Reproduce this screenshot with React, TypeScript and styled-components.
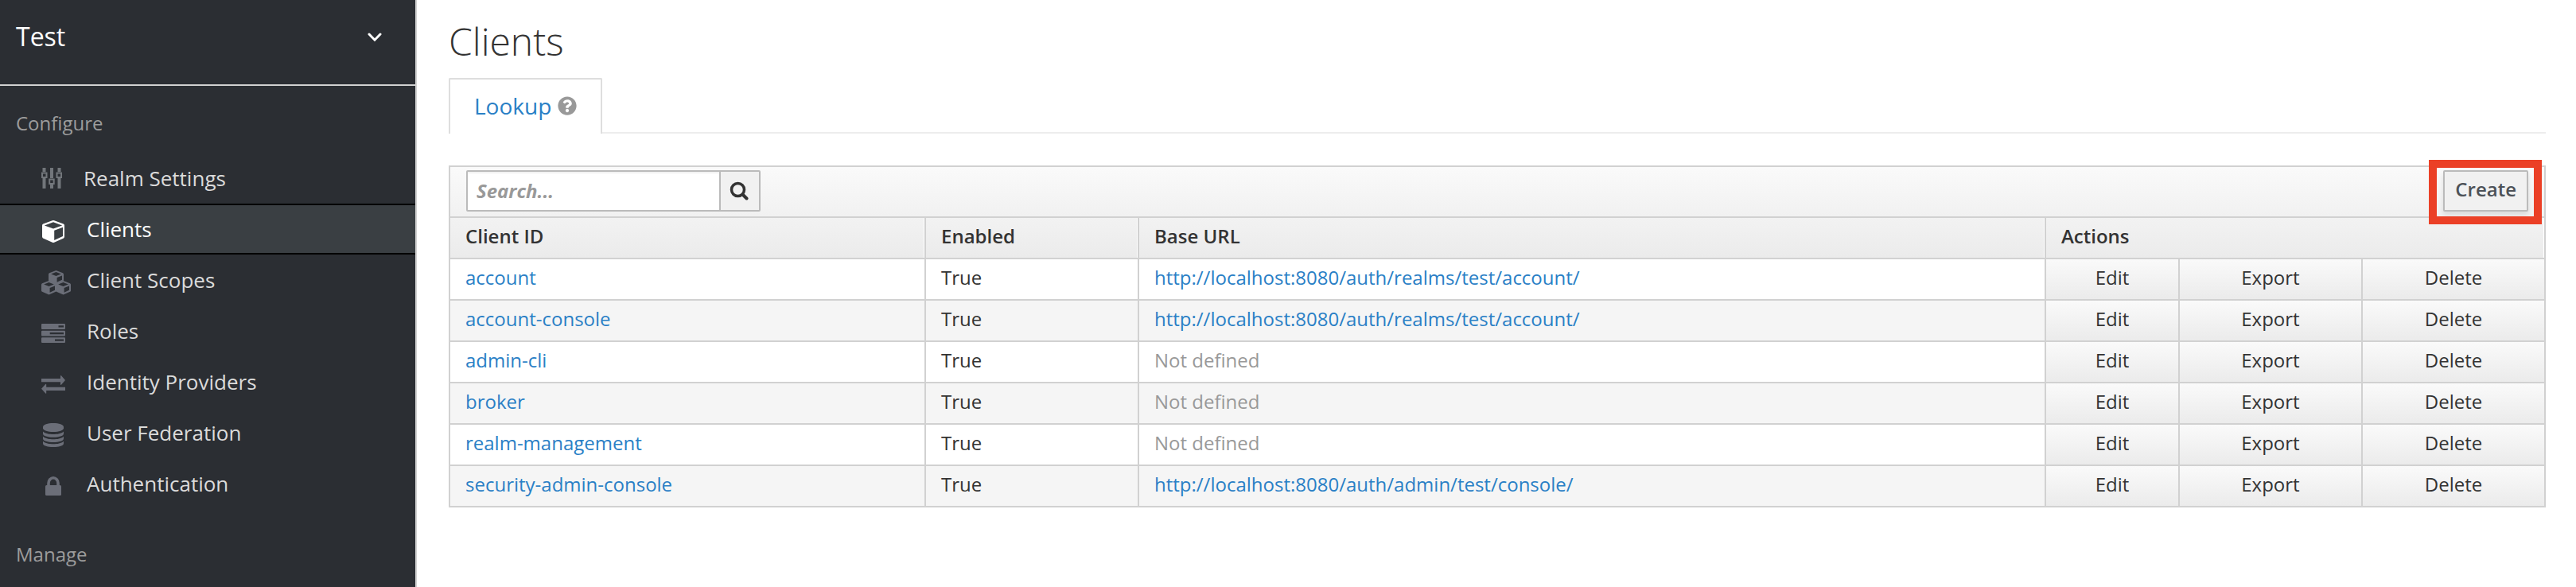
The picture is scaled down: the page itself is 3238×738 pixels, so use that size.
import React from 'react';
import styled, { createGlobalStyle } from 'styled-components';
import { FaQuestionCircle } from 'react-icons/fa';

const GlobalStyle = createGlobalStyle`
  *, *::before, *::after { box-sizing: border-box; }
  body {
    margin: 0;
    background: #fff;
    color: #333;
    font-family: 'Open Sans', 'Liberation Sans', sans-serif;
    font-size: 24px;
    line-height: 40px;
  }
  button, input { font: inherit; color: inherit; }
  a { color: #2a80c6; text-decoration: none; }
`;

const Page = styled.div`
  display: flex;
  min-height: 100vh;
`;

const Sidebar = styled.aside`
  flex: 0 0 524px;
  background: #2b2e33;
  border-right: 2px solid #d1d1d1;
`;

const RealmButton = styled.button`
  display: flex;
  align-items: flex-start;
  justify-content: space-between;
  width: 100%;
  height: 108px;
  padding: 24px 42px 0 20px;
  border: 0;
  border-bottom: 2px solid #d1d1d1;
  background: transparent;
  color: #fff;
  font-size: 32px;
  line-height: 44px;
  text-align: left;

  svg { margin-top: 17px; }
`;

const NavGroup = styled.nav`
  padding-top: 26px;
`;

const NavTitle = styled.h2`
  margin: 0;
  padding-left: 20px;
  color: #9c9c9c;
  font-size: 24px;
  font-weight: 400;
  line-height: 42px;
`;

const NavList = styled.ul`
  margin: 0;
  padding: 16px 0 10px;
  list-style: none;
`;

const NavLink = styled.a<{ $active?: boolean }>`
  display: flex;
  align-items: center;
  height: 64px;
  padding-left: 52px;
  border-top: 2px solid ${p => (p.$active ? '#000' : 'transparent')};
  border-bottom: 2px solid ${p => (p.$active ? '#000' : 'transparent')};
  background: ${p => (p.$active ? '#3a3f43' : 'transparent')};
  color: ${p => (p.$active ? '#fff' : '#dbdbdb')};
  font-size: 26px;

  svg { color: ${p => (p.$active ? '#fff' : '#6b6e78')}; }
`;

const IconSlot = styled.span<{ $narrow?: boolean }>`
  display: flex;
  flex: 0 0 ${p => (p.$narrow ? '53px' : '57px')};
  padding-top: ${p => (p.$narrow ? '0' : '6px')};
`;

const IconBox = styled.span`
  display: flex;
  justify-content: center;
  min-width: 30px;
`;

const Main = styled.main`
  flex: 1;
  min-width: 0;
  padding: 26px 38px 40px 40px;
`;

const Title = styled.h1`
  margin: 0 0 20px;
  font-size: 48px;
  font-weight: 300;
  line-height: 52px;
`;

const Tabs = styled.ul`
  display: flex;
  height: 70px;
  margin: 0 0 40px;
  padding: 0;
  border-bottom: 2px solid #ededed;
  list-style: none;
`;

const Tab = styled.li`
  display: flex;
  align-items: center;
  gap: 8px;
  height: 70px;
  padding: 0 30px 2px;
  border: 2px solid #dedede;
  border-bottom: 0;
  border-radius: 2px 2px 0 0;
  background: #fff;
  color: #999;
  font-size: 28px;
`;

const Panel = styled.section`
  border: 2px solid #d1d1d1;
`;

const Toolbar = styled.div`
  display: flex;
  align-items: flex-start;
  justify-content: space-between;
  padding: 4px 20px 6px;
  border-bottom: 2px solid #d1d1d1;
  background: linear-gradient(#fafafa, #f1f1f1);
`;

const SearchGroup = styled.form`
  display: flex;
  height: 52px;
  border: 2px solid #bbb;
  border-radius: 2px;
  background: #fff;
`;

const SearchInput = styled.input`
  width: 316px;
  padding: 0 11px;
  border: 0;
  outline: 0;
  background: #fff;
  box-shadow: inset 0 2px 2px rgba(0, 0, 0, 0.06);

  &::placeholder {
    color: #999;
    font-style: italic;
    font-weight: 700;
    opacity: 1;
  }
`;

const SearchButton = styled.button`
  display: flex;
  align-items: center;
  justify-content: center;
  width: 50px;
  padding: 0 2px 0 0;
  border: 0;
  border-left: 2px solid #bbb;
  background: #f1f1f1;
`;

const Highlight = styled.div`
  position: relative;

  &::after {
    content: '';
    position: absolute;
    inset: -13px -17px -16px -18px;
    border: 10px solid #eb4026;
    pointer-events: none;
  }
`;

const CreateButton = styled.button`
  display: block;
  height: 52px;
  padding: 0 13px 4px;
  border: 2px solid #bbb;
  border-radius: 2px;
  background: #f1f1f1;
  box-shadow: 0 4px 6px rgba(3, 3, 3, 0.1);
  color: #4d5258;
  font-weight: 600;
`;

const Table = styled.table`
  width: 100%;
  border-collapse: separate;
  border-spacing: 0;
  table-layout: fixed;
`;

const Col = styled.col<{ $width?: number }>`
  width: ${p => (p.$width ? `${p.$width}px` : 'auto')};
`;

const HeadCell = styled.th`
  height: 52px;
  padding: 0 19px 5px;
  border-bottom: 2px solid #d1d1d1;
  border-right: 2px solid #d1d1d1;
  background: linear-gradient(#f2f2f2, #ebebeb);
  box-shadow: inset -1px 0 0 #fff;
  font-weight: 600;
  text-align: left;

  &:last-child { border-right: 0; }
`;

const Cell = styled.td`
  height: 52px;
  padding: 0 19px 5px;
  border-bottom: 2px solid #d1d1d1;
  border-right: 2px solid #d1d1d1;

  &:last-child { border-right: 0; }
`;

const ActionCell = styled(Cell)`
  padding: 0;
  background: linear-gradient(#fafafa, #ebebeb);
`;

const ActionButton = styled.button`
  display: block;
  width: 100%;
  height: 50px;
  padding: 0 0 5px;
  border: 0;
  background: transparent;
`;

const Row = styled.tr`
  &:nth-child(even) { background: #f5f5f5; }
  &:last-child > td { height: 50px; border-bottom: 0; }
`;

const Muted = styled.span`
  color: #999;
`;

const HelpIcon = styled(FaQuestionCircle)`
  width: 24px;
  height: 24px;
`;

const SlidersIcon = () => (
  <svg width="26" height="26" viewBox="0 0 26 26" fill="none" stroke="#72767b" aria-hidden="true">
    <path strokeWidth="4" d="M3.5 0v5M3.5 13v13M13 0v13M13 21v5M22.5 0v5M22.5 13v13" />
    <path strokeWidth="2" d="M1 6.5h5.500v5.500h-5.500zM10.200 14.500h5.500v5.500h-5.500zM19.500 6.500h5.500v5.500h-5.500z" />
  </svg>
);

const cubeShape =
  'M14 0Q14.600 0 15.200 .3L26.800 4.600Q28 5.100 28 6.500V20.500Q28 21.800 27 22.400L15.200 27.800Q14 28.400 12.800 27.800L1 22.400Q0 21.800 0 20.500V6.500Q0 5.100 1.200 4.600L12.800 .3Q13.400 0 14 0ZM14 2.300L2.800 6.400L14 10.600L25.200 6.400ZM15.200 12.800V25L26 20V8.800Z';

const CubeIcon = () => (
  <svg width="28" height="28" viewBox="0 0 28 28" fill="currentColor" fillRule="evenodd" aria-hidden="true">
    <path d={cubeShape} />
  </svg>
);

const smallCube =
  'M9.500 0L18 3.200Q19 3.700 19 4.800V12.200Q19 13.200 18 13.700L9.500 17.500L1 13.700Q0 13.200 0 12.200V4.800Q0 3.700 1 3.200ZM9.500 2L3.200 4.500L9.500 7.100L15.800 4.500ZM10.600 9V14.700L17 11.800V6.400Z';

const CubesIcon = () => (
  <svg width="37" height="31" viewBox="0 0 37 31" fill="currentColor" fillRule="evenodd" aria-hidden="true">
    <path d={smallCube} transform="translate(9 0)" />
    <path d={smallCube} transform="translate(0 13)" />
    <path d={smallCube} transform="translate(18 13)" />
  </svg>
);

const TasksIcon = () => (
  <svg width="30" height="24" viewBox="0 0 30 24" fill="currentColor" fillRule="evenodd" aria-hidden="true">
    <path d="M1 0h28q1 0 1 1v5q0 1-1 1h-28q-1 0-1-1v-5q0-1 1-1zM21.500 2.300v2.300h6.500v-2.300z" />
    <path d="M1 8.800h28q1 0 1 1v4.600q0 1-1 1h-28q-1 0-1-1v-4.600q0-1 1-1zM10.700 11v2.300h17.300v-2.300z" />
    <path d="M1 17.200h28q1 0 1 1v4.800q0 1-1 1h-28q-1 0-1-1v-4.800q0-1 1-1zM17 19.500v2.300h11v-2.300z" />
  </svg>
);

const ExchangeIcon = () => (
  <svg width="30" height="23" viewBox="0 0 30 23" fill="currentColor" aria-hidden="true">
    <path d="M0 4h24V0.500q.3-.8 1-.2L30 6l-5 5.700q-.7.500-1-.2V8.300H0z" />
    <path d="M30 14.700H6.200V11.200q-.3-.8-1-.2L0 16.800l5.200 5.800q.7.500 1-.2V19H30z" />
  </svg>
);

const bandShape = 'M0 10.500C3 13.300 8 14 13 14S23 13.300 26 10.500V13.300C26 16.200 20 17.800 13 17.800S0 16.200 0 13.300Z';

const DatabaseIcon = () => (
  <svg width="26" height="30" viewBox="0 0 26 30" fill="currentColor" aria-hidden="true">
    <path d="M13 0C20 0 26 2 26 4.600V6.200C26 9 20 11 13 11S0 9 0 6.200V4.600C0 2 6 0 13 0Z" />
    <path d={bandShape} />
    <path d={bandShape} transform="translate(0 6.200)" />
    <path d={bandShape} transform="translate(0 12.300)" />
  </svg>
);

const LockIcon = () => (
  <svg width="20" height="24" viewBox="0 0 20 24" aria-hidden="true">
    <path d="M4 12V8.500a6 6.700 0 0 1 12 0V12" fill="none" stroke="currentColor" strokeWidth="3.600" />
    <rect y="11" width="20" height="13" rx="1.500" fill="currentColor" />
  </svg>
);

const ChevronIcon = () => (
  <svg width="18" height="12" viewBox="0 0 18 12" fill="none" stroke="#fff" strokeWidth="3" strokeLinecap="round" aria-hidden="true">
    <path d="M2 2l7 7.200L16 2" />
  </svg>
);

const SearchIcon = () => (
  <svg width="24" height="24" viewBox="0 0 24 24" fill="none" stroke="#333" aria-hidden="true">
    <circle cx="10.500" cy="10.500" r="8" strokeWidth="3.500" />
    <path d="M16.500 16.500L21.500 21.500" strokeWidth="4" strokeLinecap="round" />
  </svg>
);

const configureItems = [
  { label: 'Realm Settings', Icon: SlidersIcon, narrow: true },
  { label: 'Clients', Icon: CubeIcon, active: true },
  { label: 'Client Scopes', Icon: CubesIcon },
  { label: 'Roles', Icon: TasksIcon },
  { label: 'Identity Providers', Icon: ExchangeIcon },
  { label: 'User Federation', Icon: DatabaseIcon },
  { label: 'Authentication', Icon: LockIcon },
];

const accountUrl = 'http://localhost:8080/auth/realms/test/account/';

const clients = [
  { id: 'account', url: accountUrl },
  { id: 'account-console', url: accountUrl },
  { id: 'admin-cli', url: null },
  { id: 'broker', url: null },
  { id: 'realm-management', url: null },
  { id: 'security-admin-console', url: 'http://localhost:8080/auth/admin/test/console/' },
];

const actions = ['Edit', 'Export', 'Delete'];

export default function App() {
  return (
    <>
      <GlobalStyle />
      <Page>
        <Sidebar>
          <RealmButton type="button">
            Test
            <ChevronIcon />
          </RealmButton>
          <NavGroup aria-label="Configure">
            <NavTitle>Configure</NavTitle>
            <NavList>
              {configureItems.map(({ label, Icon, active, narrow }) => (
                <li key={label}>
                  <NavLink href="#" $active={active} aria-current={active ? 'page' : undefined}>
                    <IconSlot $narrow={narrow}>
                      {narrow ? <Icon /> : <IconBox><Icon /></IconBox>}
                    </IconSlot>
                    {label}
                  </NavLink>
                </li>
              ))}
            </NavList>
          </NavGroup>
          <NavGroup aria-label="Manage">
            <NavTitle>Manage</NavTitle>
          </NavGroup>
        </Sidebar>
        <Main>
          <Title>Clients</Title>
          <Tabs>
            <Tab>
              <a href="#">Lookup</a>
              <HelpIcon aria-label="Help" />
            </Tab>
          </Tabs>
          <Panel>
            <Toolbar>
              <SearchGroup role="search" onSubmit={e => e.preventDefault()}>
                <SearchInput type="text" placeholder="Search..." aria-label="Search clients" />
                <SearchButton type="submit" aria-label="Search">
                  <SearchIcon />
                </SearchButton>
              </SearchGroup>
              <Highlight>
                <CreateButton type="button">Create</CreateButton>
              </Highlight>
            </Toolbar>
            <Table>
              <colgroup>
                <Col $width={598} />
                <Col $width={268} />
                <Col />
                <Col $width={168} />
                <Col $width={230} />
                <Col $width={228} />
              </colgroup>
              <thead>
                <tr>
                  <HeadCell scope="col">Client ID</HeadCell>
                  <HeadCell scope="col">Enabled</HeadCell>
                  <HeadCell scope="col">Base URL</HeadCell>
                  <HeadCell scope="colgroup" colSpan={3}>Actions</HeadCell>
                </tr>
              </thead>
              <tbody>
                {clients.map(client => (
                  <Row key={client.id}>
                    <Cell><a href="#">{client.id}</a></Cell>
                    <Cell>True</Cell>
                    <Cell>
                      {client.url ? <a href={client.url}>{client.url}</a> : <Muted>Not defined</Muted>}
                    </Cell>
                    {actions.map(action => (
                      <ActionCell key={action}>
                        <ActionButton type="button">{action}</ActionButton>
                      </ActionCell>
                    ))}
                  </Row>
                ))}
              </tbody>
            </Table>
          </Panel>
        </Main>
      </Page>
    </>
  );
}
